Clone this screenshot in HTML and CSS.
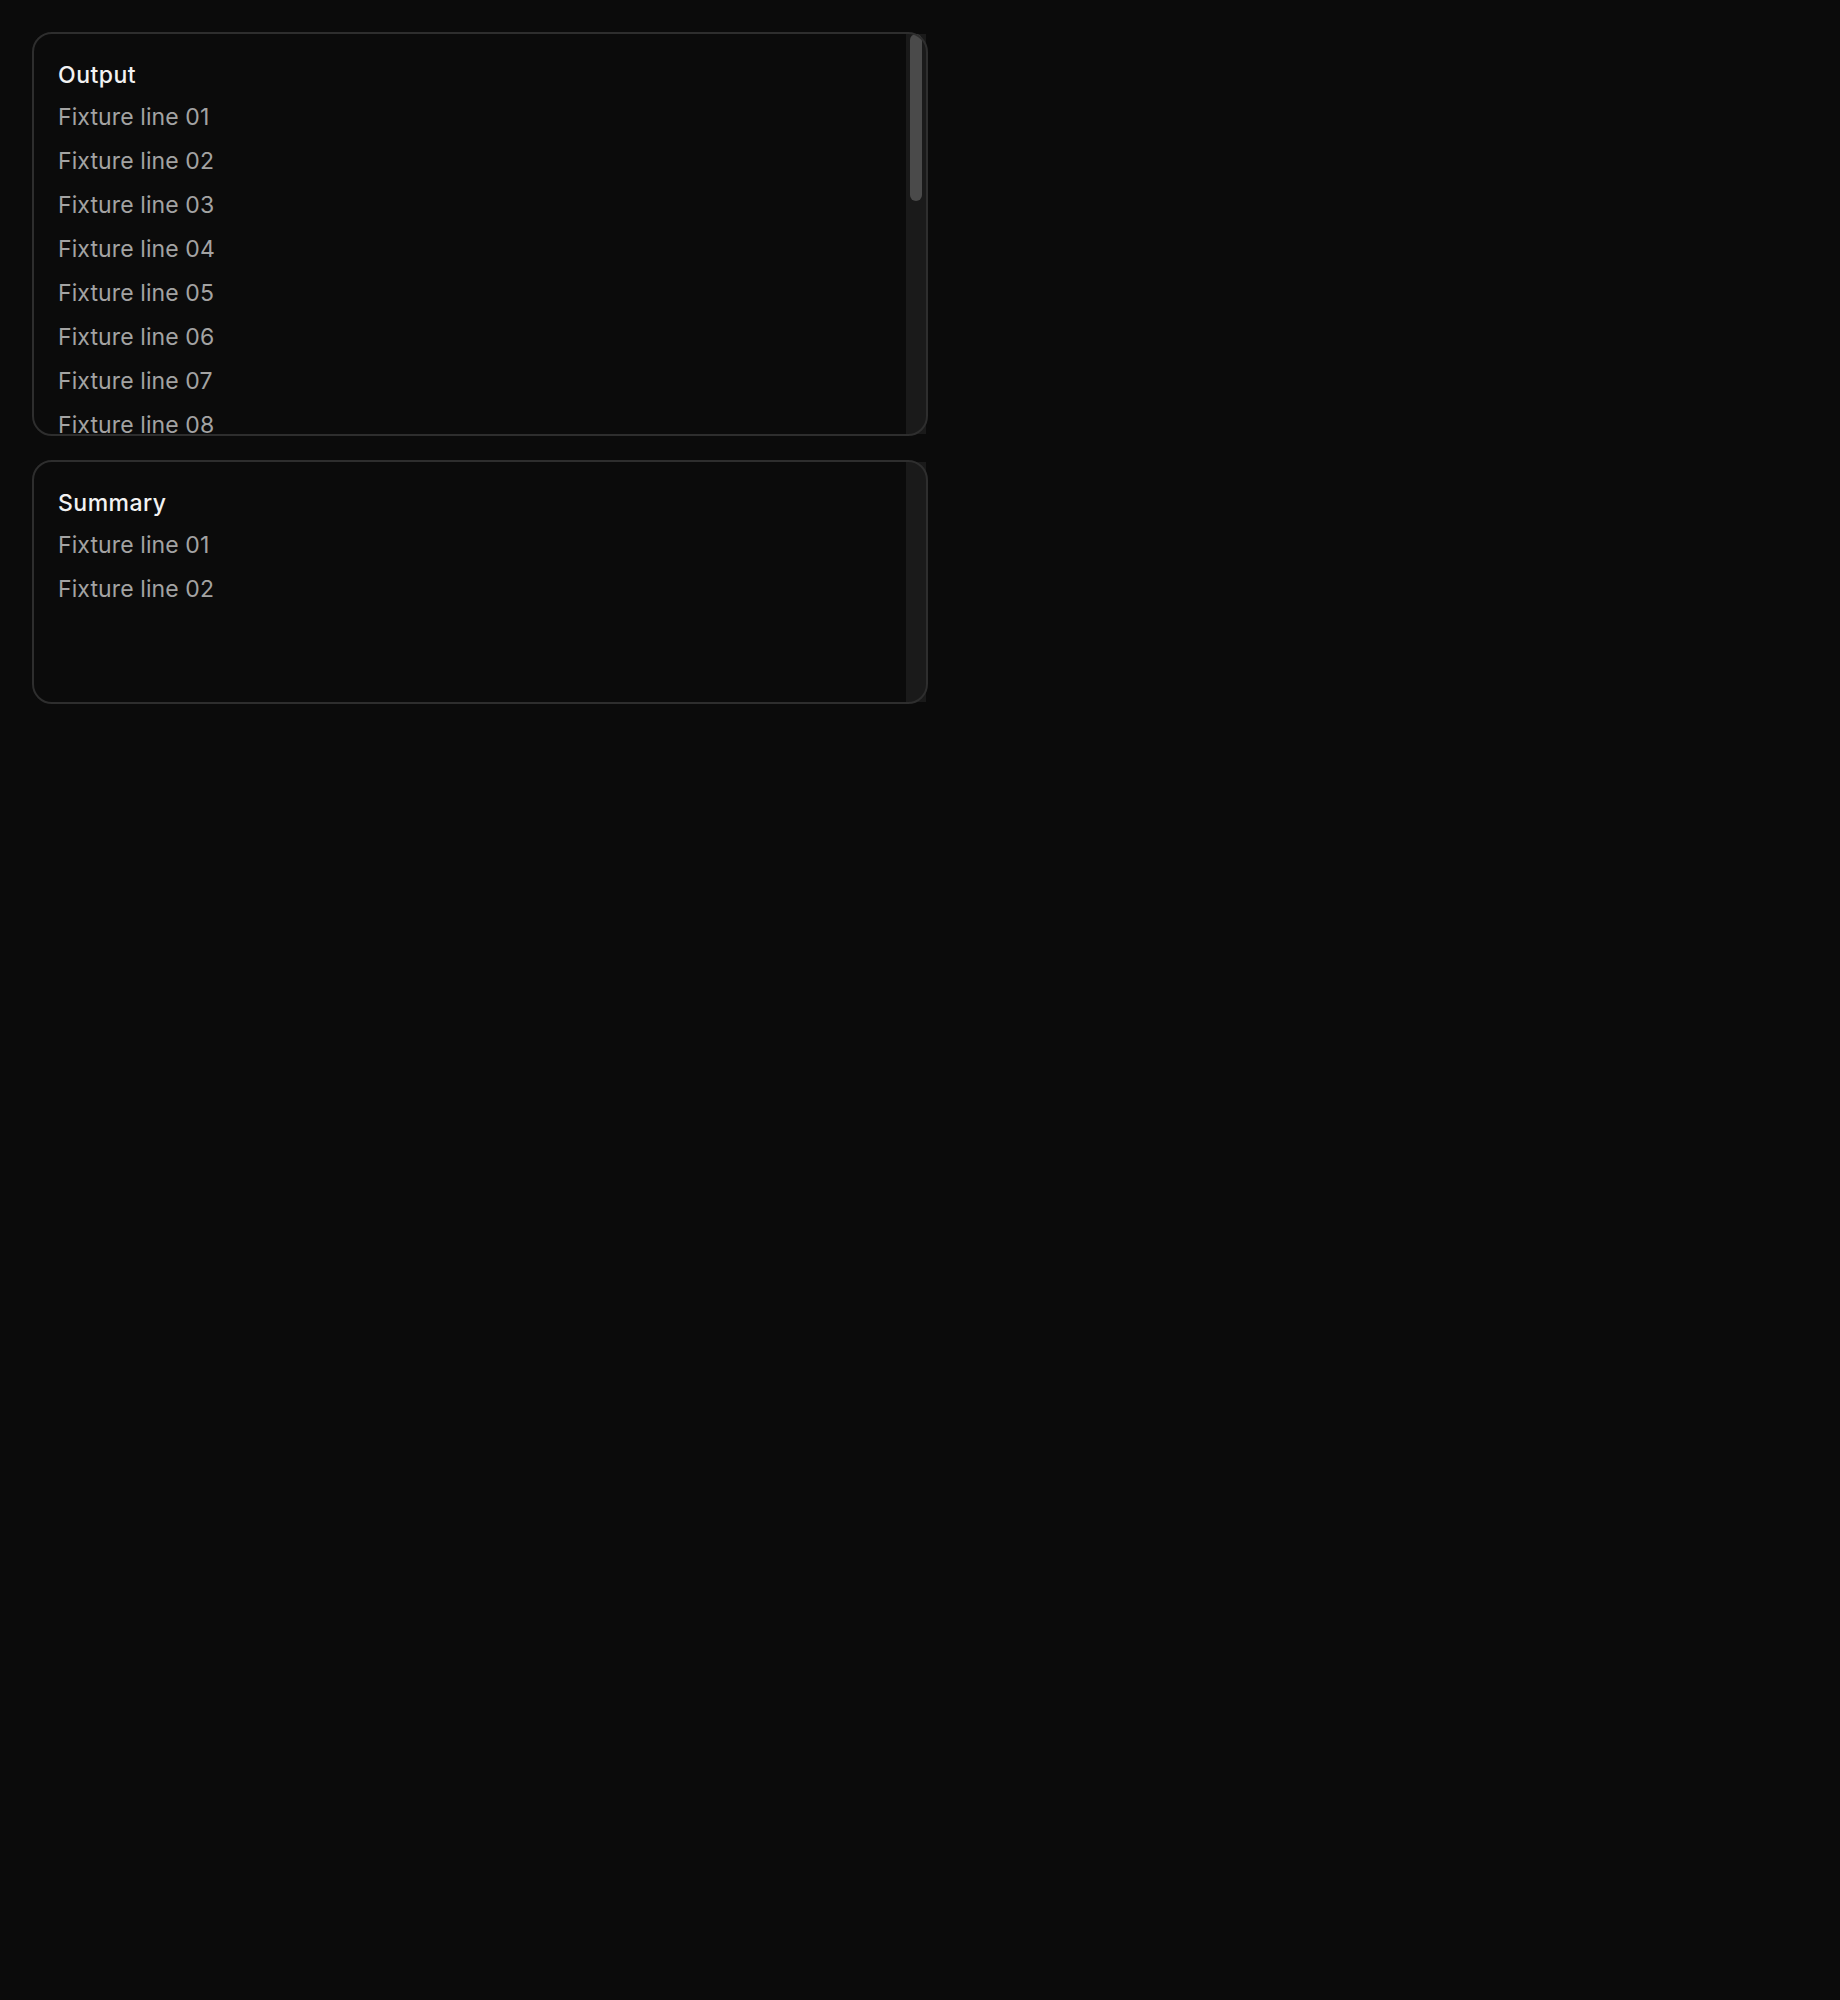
FILE: index.html
```html
<!DOCTYPE html>
<html lang="en">
<head>
<meta charset="utf-8">
<title>Panels</title>
<link rel="stylesheet" href="styles.css">
</head>
<body>
<main class="page">
  <section class="panel panel-output">
    <div class="panel-scroll">
      <h2 class="panel-title">Output</h2>
      <ul class="lines">
        <li>Fixture line 01</li>
        <li>Fixture line 02</li>
        <li>Fixture line 03</li>
        <li>Fixture line 04</li>
        <li>Fixture line 05</li>
        <li>Fixture line 06</li>
        <li>Fixture line 07</li>
        <li>Fixture line 08</li>
        <li>Fixture line 09</li>
        <li>Fixture line 10</li>
        <li>Fixture line 11</li>
        <li>Fixture line 12</li>
        <li>Fixture line 13</li>
        <li>Fixture line 14</li>
        <li>Fixture line 15</li>
        <li>Fixture line 16</li>
        <li>Fixture line 17</li>
        <li>Fixture line 18</li>
        <li>Fixture line 19</li>
        <li>Fixture line 20</li>
      </ul>
    </div>
    <div class="scroll-track"><div class="scroll-thumb"></div></div>
  </section>
  <section class="panel panel-summary">
    <div class="panel-scroll">
      <h2 class="panel-title">Summary</h2>
      <ul class="lines">
        <li>Fixture line 01</li>
        <li>Fixture line 02</li>
      </ul>
    </div>
    <div class="scroll-track"></div>
  </section>
</main>
</body>
</html>
```

FILE: styles.css
```css
* { box-sizing: border-box; }
html, body { margin: 0; padding: 0; background: #0b0b0b; }
body {
  font-family: Inter, "Noto Sans", sans-serif;
  color: #a3a3a3;
}
.page {
  padding: 32px;
  display: flex;
  flex-direction: column;
  gap: 24px;
  width: 960px;
}
.panel {
  position: relative;
  width: 896px;
  border-radius: 20px;
  background: #0b0b0b;
}
.panel::after {
  content: "";
  position: absolute;
  inset: 0;
  border: 2px solid #2e2e2e;
  border-radius: 20px;
  pointer-events: none;
}
.panel-output { height: 404px; }
.panel-summary { height: 244px; }
.panel-scroll {
  margin: 2px;
  height: calc(100% - 4px);
  overflow-y: auto;
  scrollbar-width: none;
  padding: 25px 44px 24px 24px;
}
.panel-scroll::-webkit-scrollbar { display: none; }
.scroll-track {
  position: absolute;
  top: 2px;
  right: 2px;
  bottom: 2px;
  width: 20px;
  background: #1a1a1a;
}
.scroll-thumb {
  margin-left: 4px;
  width: 12px;
  height: 167px;
  border-radius: 6px;
  background: #4a4a4a;
}
.panel-title {
  margin: 0 0 10px;
  font-size: 23px;
  line-height: 32px;
  font-weight: 500;
  letter-spacing: 0.5px;
  color: #f2f2f2;
}
.lines {
  list-style: none;
  margin: 0;
  padding: 0;
  display: flex;
  flex-direction: column;
  gap: 12px;
}
.lines li {
  font-size: 23px;
  line-height: 32px;
  letter-spacing: 0.1px;
}
```
